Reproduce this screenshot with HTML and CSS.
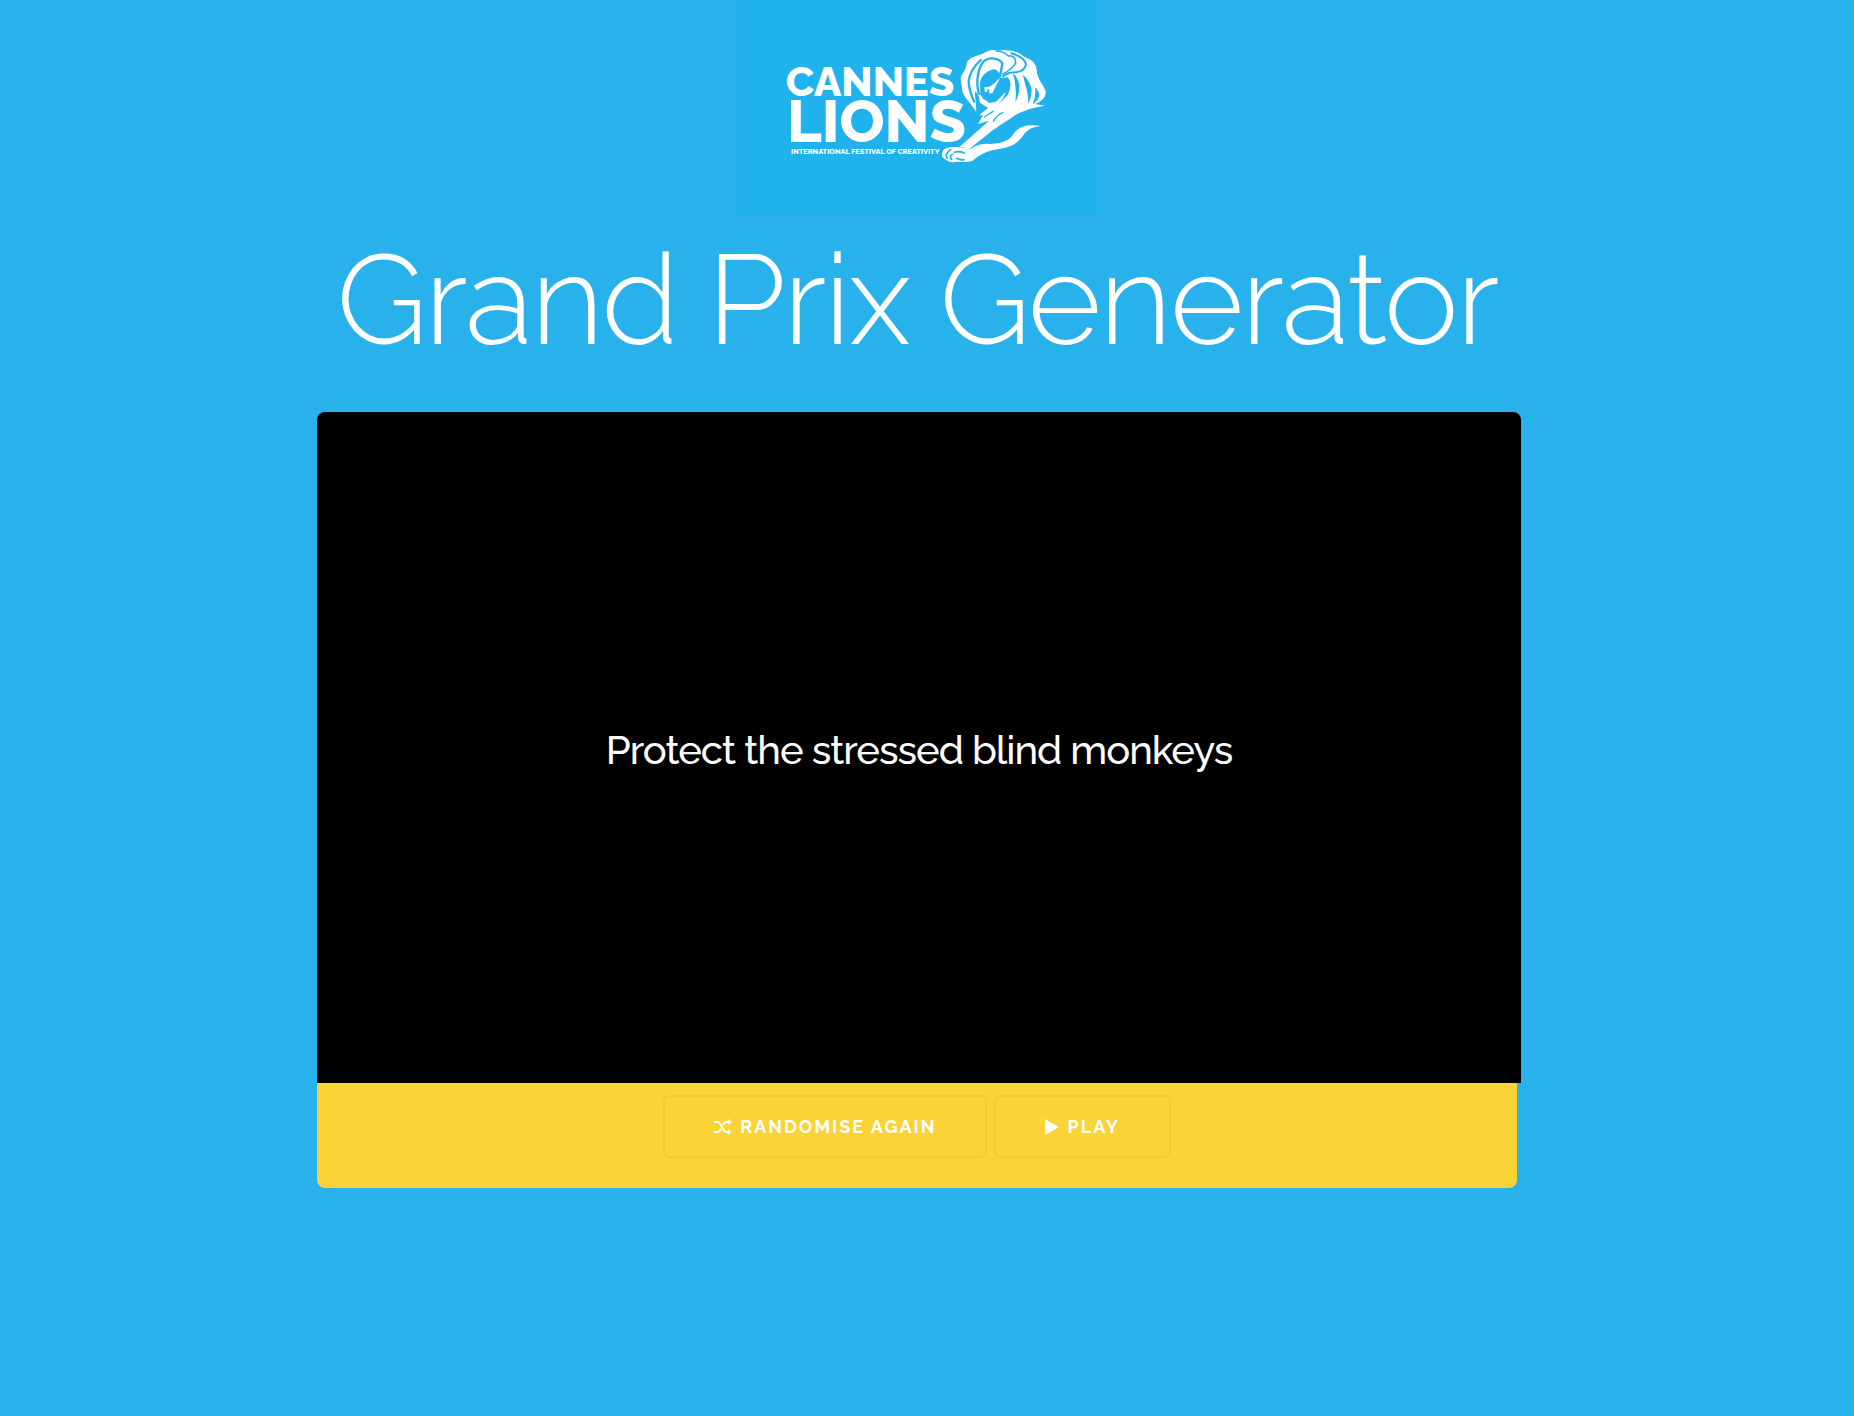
FILE: index.html
```html
<!DOCTYPE html>
<html lang="en">

<head>
    <meta charset="UTF-8">
    <meta name="viewport" content="width=device-width, initial-scale=1.0">
    <title>Grand Prix Generator</title>
    <link rel="stylesheet" href="styles.css">
</head>

<body>

    <header>
        <svg class="logo" viewBox="22 0 1080 642" role="img" aria-label="Cannes Lions International Festival of Creativity">
            <g class="logo-text">
                <text x="168" y="288" font-size="124">CANNES</text>
                <text x="172" y="426" font-size="178">LIONS</text>
                <text x="184" y="461" font-size="22">INTERNATIONAL FESTIVAL OF CREATIVITY</text>
            </g>
            <!-- Head and mane -->
            <path fill="#fff" d="M785 150C770 154 757 164 739 168C722 173 712 180 710 196C709 210 694 223 693 238C694 250 698 262 697 272C704 292 724 310 739 335C741 305 732 285 738 272L748 291L751 308L775 324L748 346L760 345L745 372L778 362L690 440L720 446L790 390L850 350Q884 326 946 317Q928 314 916 312Q950 300 948 274C942 254 922 238 921 210C921 192 904 176 884 171C866 155 845 148 808 152Q797 150 785 150Z" />
            <!-- Paw and front leg -->
            <path fill="#fff" d="M640 451Q654 438 690 442L724 446Q748 429 783 432C820 430 839 422 853 400Q873 368 935 378Q900 380 885 400C866 431 843 441 811 446C776 451 752 461 728 483Q711 488 682 485Q660 490 650 480Q636 475 637 463Z" />
            <!-- Face -->
            <path class="cut" d="M755 230Q764 213 782 210Q797 190 804 212L817 224L812 234L835 232Q850 252 835 279L807 308L791 312L778 316L754 304L763 300L752 283L751 250Z" />
            <path fill="#fff" d="M752 240Q758 207 786 192Q803 193 810 221Q797 202 783 211Q765 216 752 240ZM764 262L783 259L811 234L788 280L778 280L779 268L774 266L772 277L765 274ZM752 297L768 300L778 309L798 306L828 276L820 298L838 286L824 308L795 322L779 321L753 309Z" />
            <!-- Mane strands -->
            <path class="cut" d="M849 218Q866 232 869 258Q871 282 857 306Q860 280 857 258Q855 234 849 218ZM880 224Q901 242 906 268Q907 290 896 312Q896 290 891 268Q884 246 880 224ZM916 262Q928 272 929 287Q925 302 909 313Q920 286 916 262ZM833 240Q847 262 834 285L806 314Q828 286 833 270Z" />
            <g class="strand">
                <path d="M753 180C732 200 718 224 717 245Q717 265 733 305" stroke-width="7" />
                <path d="M748 282C737 245 745 203 763 183Q777 172 794 176Q815 181 818 191L813 218" stroke-width="7" />
                <path d="M800 153Q822 154 836 168Q859 166 858 189Q850 205 820 222" stroke-width="5" />
                <path d="M845 160Q884 171 889 193Q884 216 855 217Q836 217 820 229" stroke-width="6" />
                <path d="M791 364Q804 342 820 338M764 351L790 334" stroke-width="4" />
                <path d="M663 449Q645 461 652 475M674 457Q687 452 704 459M669 463Q657 469 666 478M681 475Q691 481 703 479" stroke-width="5" />
            </g>
        </svg>
        <h1>Grand Prix Generator</h1>
    </header>

    <main>
        <div class="screen">
            <p>Protect the stressed blind monkeys</p>
        </div>
        <div class="controls">
            <button type="button">
                <svg class="icon-random" viewBox="0 0 18 16" aria-hidden="true">
                    <path d="M0 3H3C9 3 7 13 13 13H15M0 13H3C5 13 6 12 7 10M9 6C10 4 11 3 13 3H15" fill="none" stroke="#fff" stroke-width="2" />
                    <path d="M14 0L18 3L14 6ZM14 10L18 13L14 16Z" fill="#fff" />
                </svg>
                Randomise again
            </button>
            <button type="button">
                <svg class="icon-play" viewBox="0 0 14 16" aria-hidden="true">
                    <path d="M0 0L14 8L0 16Z" fill="#fff" />
                </svg>
                Play
            </button>
        </div>
    </main>

</body>

</html>
```

FILE: styles.css
```css
* {
    box-sizing: border-box;
}

body {
    font-family: Raleway, Lato, sans-serif;
    margin: 0;
    padding: 0 20px 0 0;
    background-color: #28b1ea;
    color: #fff;
}

header {
    text-align: center;
}

.logo {
    display: block;
    width: 360px;
    margin: 0 auto;
    background-color: #1fb2ec;
}

.logo-text {
    font-family: Raleway, Lato, sans-serif;
    font-weight: 800;
    fill: #fff;
}

.cut {
    fill: #1fb2ec;
}

.strand {
    fill: none;
    stroke: #1fb2ec;
    stroke-linecap: round;
}

h1 {
    margin: 0;
    padding: 10px 0 36px;
    font-size: 126px;
    font-weight: 300;
    line-height: 152px;
    letter-spacing: -2px;
}

main {
    width: 1200px;
    max-width: 100%;
    margin: 0 auto;
}

.screen {
    display: flex;
    align-items: center;
    justify-content: center;
    height: 671px;
    margin-right: -4px;
    padding-top: 5px;
    background-color: #000;
    border-radius: 8px 8px 0 0;
}

.screen p {
    margin: 0;
    font-size: 40px;
    font-weight: 500;
    line-height: 48px;
    letter-spacing: -1px;
}

.controls {
    display: flex;
    justify-content: center;
    gap: 7px;
    padding: 12px 0 30px;
    background-color: #fad336;
    border-radius: 0 0 8px 8px;
}

button {
    display: flex;
    align-items: center;
    gap: 8px;
    height: 63px;
    padding: 0 49px;
    border: 2px solid #f4ca30;
    border-radius: 6px;
    background-color: transparent;
    color: #fff;
    font-family: inherit;
    font-size: 18px;
    font-weight: 700;
    letter-spacing: 2px;
    text-transform: uppercase;
    cursor: pointer;
}

.icon-random {
    width: 18px;
    height: 16px;
}

.icon-play {
    width: 14px;
    height: 16px;
}
```
